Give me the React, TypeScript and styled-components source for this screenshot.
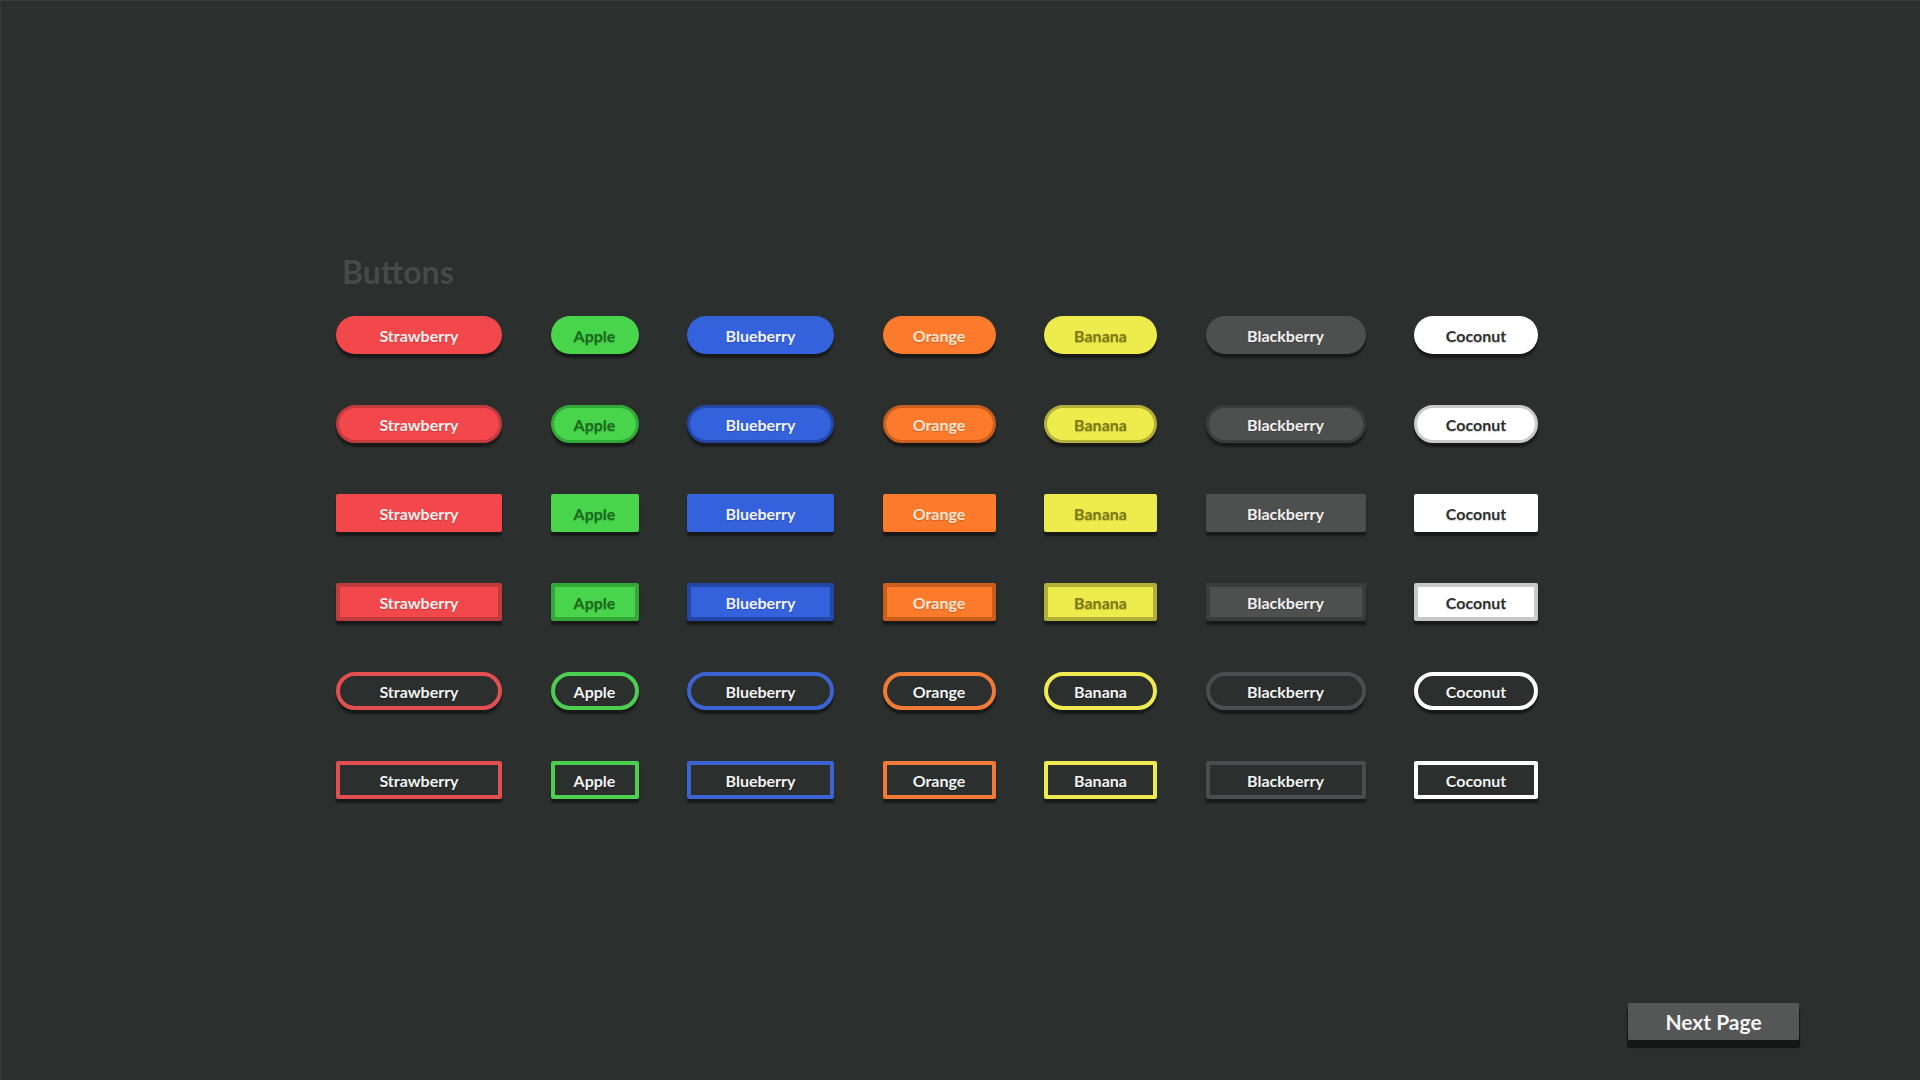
import React from 'react'
import styled, { createGlobalStyle, css } from 'styled-components'

const GlobalStyle = createGlobalStyle`
	html, body {
		margin: 0;
		padding: 0;
		background: #2b2f2e;
	}
	* {
		box-sizing: border-box;
	}
`;

interface Fruit {
	name: string;
	width: number;
	base: string;
	dark: string;
	text: string;
	outline: string;
}

const fruits: Fruit[] = [
	{name: 'Strawberry', width: 166, base: '#f2484b', dark: '#c13a3c', text: '#fbeeee', outline: '#e24f51'},
	{name: 'Apple', width: 88, base: '#48d54b', dark: '#34a837', text: '#1b6a1d', outline: '#4ccf50'},
	{name: 'Blueberry', width: 147, base: '#3461dc', dark: '#2446a6', text: '#f2f4fb', outline: '#3c63d2'},
	{name: 'Orange', width: 113, base: '#fb7a2c', dark: '#c95e1e', text: '#fde6d0', outline: '#f07b36'},
	{name: 'Banana', width: 113, base: '#eeeb4d', dark: '#b2af38', text: '#7b7a14', outline: '#eeea50'},
	{name: 'Blackberry', width: 160, base: '#4e4f4f', dark: '#3b3c3c', text: '#f2f2f2', outline: '#4b4e4e'},
	{name: 'Coconut', width: 124, base: '#ffffff', dark: '#c9c9c9', text: '#2f3131', outline: '#ffffff'},
];

type Variant = 'pill' | 'pillEdge' | 'rect' | 'rectEdge' | 'pillLine' | 'rectLine';

const rows: Variant[] = ['pill', 'pillEdge', 'rect', 'rectEdge', 'pillLine', 'rectLine'];

const App = () => {
	return (
		<Page>
			<GlobalStyle />
			<Content>
				<Title>Buttons</Title>
				<Grid>
					{rows.map((variant) =>
						fruits.map((fruit) => (
							<FruitButton
								key={variant + fruit.name}
								$variant={variant}
								$width={fruit.width}
								$base={fruit.base}
								$dark={fruit.dark}
								$text={fruit.text}
								$outline={fruit.outline}
							>
								{fruit.name}
							</FruitButton>
						))
					)}
				</Grid>
			</Content>
			<Footer>
				<NextButton>Next Page</NextButton>
			</Footer>
		</Page>
	);
}

const Page = styled.div`
	min-height: 100vh;
	display: flex;
	flex-direction: column;
	background: #2b2f2e;
	border-top: 1px solid #393d3c;
	border-left: 1px solid #353938;
	font-family: Lato, "Open Sans", "Liberation Sans", sans-serif;
`;

const Content = styled.div`
	padding: 251px 0 0 335px;
`;

const Title = styled.h1`
	margin: 0 0 24px 6px;
	font-size: 32px;
	line-height: 40px;
	font-weight: 700;
	color: #464a49;
`;

const Grid = styled.div`
	display: grid;
	grid-template-columns: repeat(7, max-content);
	column-gap: 48.5px;
	row-gap: 51px;
`;

interface ButtonProps {
	$variant: Variant;
	$width: number;
	$base: string;
	$dark: string;
	$text: string;
	$outline: string;
}

const FruitButton = styled.button<ButtonProps>`
	width: ${({$width}) => $width}px;
	height: 38px;
	padding: 0;
	display: flex;
	align-items: center;
	justify-content: center;
	font-family: inherit;
	font-size: 16px;
	font-weight: 700;
	cursor: pointer;
	box-shadow: 0 4px 2px rgba(0, 0, 0, 0.45);
	border-radius: ${({$variant}) => ($variant.startsWith('pill') ? '19px' : '2px')};

	${({$variant, $base, $dark, $text, $outline}) => {
		if ($variant === 'pill' || $variant === 'rect') {
			return css`
				background: ${$base};
				color: ${$text};
				border: none;
				text-shadow: 0 1px 1px rgba(0, 0, 0, 0.2);
			`;
		}
		if ($variant === 'pillEdge') {
			return css`
				background: ${$base};
				color: ${$text};
				border: 3px solid ${$dark};
				text-shadow: 0 1px 1px rgba(0, 0, 0, 0.2);
			`;
		}
		if ($variant === 'rectEdge') {
			return css`
				background: ${$base};
				color: ${$text};
				border: 4px solid ${$dark};
				text-shadow: 0 1px 1px rgba(0, 0, 0, 0.2);
			`;
		}
		return css`
			background: transparent;
			color: #f4f4f4;
			border: 4px solid ${$outline};
			text-shadow: 0 1px 1px rgba(0, 0, 0, 0.4);
		`;
	}}
`;

const Footer = styled.div`
	margin-top: auto;
	display: flex;
	justify-content: flex-end;
	padding: 0 121px 40px 0;
`;

const NextButton = styled.button`
	width: 171px;
	height: 37px;
	padding: 0;
	border: none;
	border-radius: 1px;
	background: #555656;
	color: #f5f5f5;
	font-family: inherit;
	font-size: 21px;
	font-weight: 700;
	box-shadow: 0 7px 1px 1px rgba(0, 0, 0, 0.5);
	cursor: pointer;
`;

export default App
